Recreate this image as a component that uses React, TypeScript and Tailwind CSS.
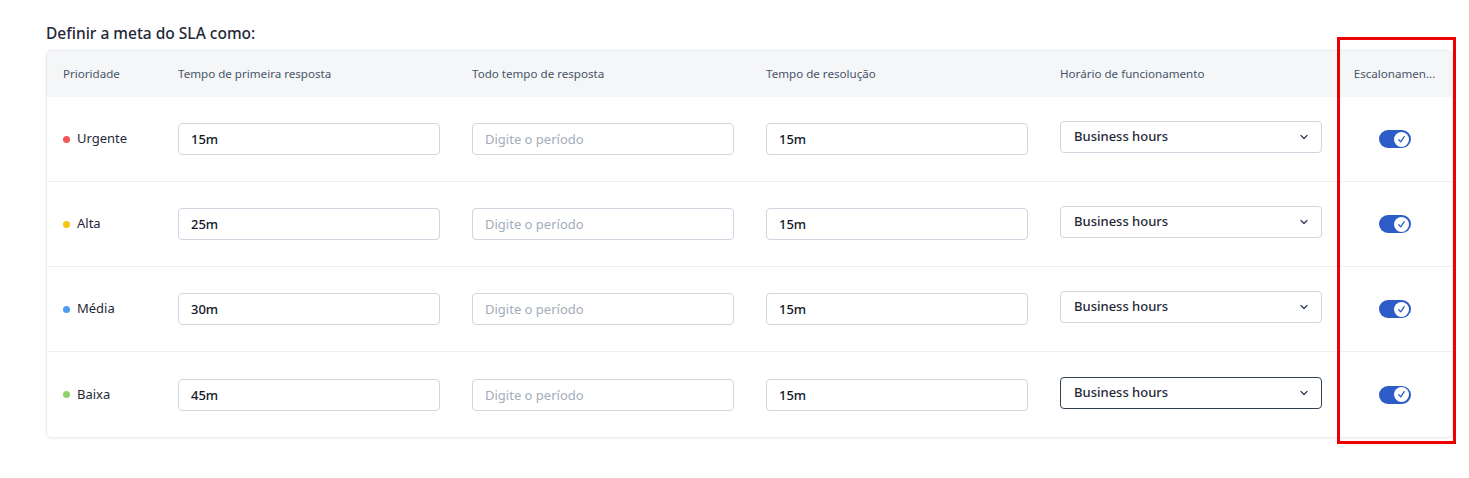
import { ChevronDown } from 'lucide-react'

const rows = [
  { name: 'Urgente', dot: 'bg-[#f25656]', first: '15m' },
  { name: 'Alta', dot: 'bg-[#f7c511]', first: '25m' },
  { name: 'Média', dot: 'bg-[#4e9bf5]', first: '30m' },
  { name: 'Baixa', dot: 'bg-[#8fd16a]', first: '45m' },
]

const grid = 'grid grid-cols-[115px_294px_294px_294px_277px_115px] pl-4'

function Toggle() {
  return (
    <div className="flex h-[18px] w-8 items-center justify-end rounded-full bg-[#2d5bc7] px-[2px]">
      <div className="flex h-[15px] w-[15px] items-center justify-center rounded-full bg-white">
        <svg width="9" height="9" viewBox="0 0 10 10" fill="none">
          <path d="M2 5.3 L4.2 7.6 L8 1.8" stroke="#2d5bc7" strokeWidth="1.4" strokeLinecap="round" strokeLinejoin="round" />
        </svg>
      </div>
    </div>
  )
}

export default function App() {
  return (
    <div className="relative min-h-[478px] bg-white pl-[46px] pr-4 pt-[23px] font-['Noto_Sans',sans-serif]">
      <h3 className="text-[15.5px] font-medium leading-5 text-[#1f2937]">Definir a meta do SLA como:</h3>

      <div className="mt-[7px] w-[1407px] overflow-hidden rounded-[5px] border border-[#e8ebef] shadow-[0_1px_3px_rgba(15,23,42,0.06)]">
        {/* Header */}
        <div className={`${grid} h-[46px] items-center bg-[#f5f6f8] text-[11.6px] text-[#475569]`}>
          <div>Prioridade</div>
          <div>Tempo de primeira resposta</div>
          <div>Todo tempo de resposta</div>
          <div>Tempo de resolução</div>
          <div>Horário de funcionamento</div>
          <div className="text-center">Escalonamen...</div>
        </div>

        {/* Rows */}
        {rows.map((r, i) => (
          <div
            key={r.name}
            className={`${grid} h-[85px] items-center ${i < rows.length - 1 ? 'border-b border-[#edf0f3]' : ''}`}
          >
            <div className="flex items-center gap-[7px] text-[13px] text-[#1f2937]">
              <span className={`h-[7px] w-[7px] rounded-full ${r.dot}`} />
              {r.name}
            </div>
            <div>
              <input
                readOnly
                value={r.first}
                className="h-8 w-[262px] rounded-[4px] border border-[#cfd6df] px-3 text-[13px] font-medium text-[#111827] outline-none"
              />
            </div>
            <div>
              <input
                readOnly
                placeholder="Digite o período"
                className="h-8 w-[262px] rounded-[4px] border border-[#cfd6df] px-3 text-[13px] text-[#111827] outline-none placeholder:text-[#a3adba]"
              />
            </div>
            <div>
              <input
                readOnly
                value="15m"
                className="h-8 w-[262px] rounded-[4px] border border-[#cfd6df] px-3 text-[13px] font-medium text-[#111827] outline-none"
              />
            </div>
            <div className="-mt-1">
              <div
                className={`flex h-8 w-[262px] items-center justify-between rounded-[4px] border pl-[13px] pr-[11px] text-[13px] font-medium text-[#1f2937] ${
                  i === rows.length - 1 ? 'border-[#334155]' : 'border-[#cfd6df]'
                }`}
              >
                <span>Business hours</span>
                <ChevronDown size={12} strokeWidth={2.5} className="text-[#334155]" />
              </div>
            </div>
            <div className="flex justify-center">
              <Toggle />
            </div>
          </div>
        ))}
      </div>

      {/* annotation box */}
      <div className="absolute left-[1337px] top-[37px] h-[407px] w-[119px] border-[3px] border-[#ee0000]" />
    </div>
  )
}
